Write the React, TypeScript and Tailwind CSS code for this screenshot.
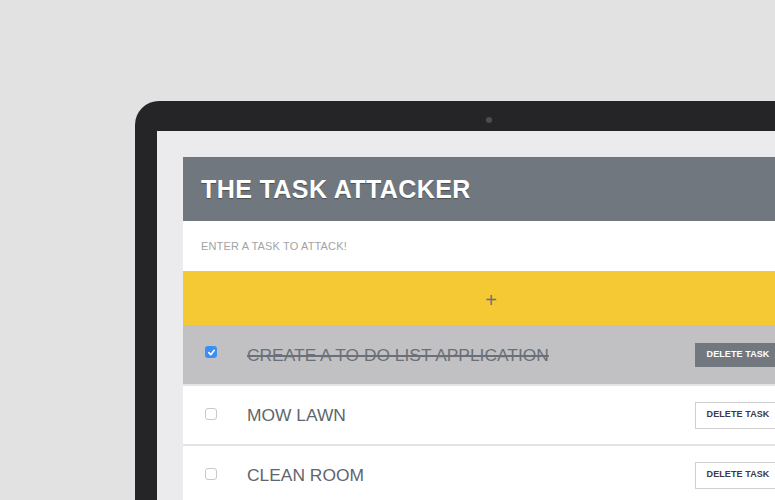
import React from 'react'

interface Task {
  id: number
  title: string
  done: boolean
}

const tasks: Task[] = [
  { id: 1, title: 'Create a to do list application', done: true },
  { id: 2, title: 'Mow lawn', done: false },
  { id: 3, title: 'Clean room', done: false },
]

function CheckBox({ checked }: { checked: boolean }) {
  if (checked) {
    return (
      <div className="w-[12px] h-[12px] rounded-[3px] bg-[#3b8ff3] flex items-center justify-center shrink-0">
        <svg width="9" height="9" viewBox="0 0 10 10">
          <path d="M2 5.2 L4.2 7.4 L8 2.6" fill="none" stroke="white" strokeWidth="1.8" strokeLinecap="round" strokeLinejoin="round" />
        </svg>
      </div>
    )
  }
  return <div className="w-[12px] h-[12px] rounded-[3px] border border-[#c9c9c9] bg-white shrink-0" />
}

function TaskRow({ task }: { task: Task }) {
  return (
    <div
      className={
        task.done
          ? 'h-[61px] flex items-center bg-[#c1c1c3] border-b-2 border-[#e4e4e6] pl-[22px] pr-[18px]'
          : 'h-[60px] flex items-center bg-white border-b-2 border-[#e4e4e6] pl-[22px] pr-[18px]'
      }
    >
      <div className={task.done ? '-mt-[5px]' : '-mt-[3px]'}>
        <CheckBox checked={task.done} />
      </div>
      <div
        className={
          task.done
            ? 'ml-[30px] flex-1 uppercase text-[17.4px] text-[#6b7078] line-through decoration-[1.5px] pt-[1px]'
            : 'ml-[30px] flex-1 uppercase text-[17.4px] text-[#5f656d]'
        }
      >
        {task.title}
      </div>
      <button
        className={
          task.done
            ? 'h-[24px] w-[86px] bg-[#71787f] text-white text-[9px] font-bold tracking-[0.1px] mt-[1px]'
            : 'h-[27px] w-[86px] bg-white border border-[#cfcfd1] text-[#3d3a46] text-[9px] font-bold tracking-[0.1px]'
        }
      >
        DELETE TASK
      </button>
    </div>
  )
}

export default function App() {
  return (
    <div
      className="w-[775px] h-[500px] overflow-hidden bg-[#e2e2e2] pt-[101px] pl-[135px] flex"
      style={{ fontFamily: '"Liberation Sans", Arial, sans-serif' }}
    >
      {/* laptop bezel */}
      <div className="relative w-[720px] shrink-0 bg-[#252527] rounded-tl-[24px] pt-[30px] pl-[22px]">
        <div className="absolute top-[16px] left-[351px] w-[6px] h-[6px] rounded-full bg-[#4d4d50]" />

        {/* screen */}
        <div className="h-full bg-[#ebebed] pt-[26px] pl-[26px]">
          <div className="w-[616px] bg-white">
            <div className="h-[64px] bg-[#70777e] flex items-center pl-[18px]">
              <h1
                className="text-white text-[25px] font-bold tracking-[0.4px] pt-[1px]"
                style={{ textShadow: '0 1px 1px rgba(0,0,0,0.35)' }}
              >
                THE TASK ATTACKER
              </h1>
            </div>
            <div className="h-[50px] flex items-center pl-[18px]">
              <span className="text-[11px] text-[#a3a3a5] tracking-[0.15px]">ENTER A TASK TO ATTACK!</span>
            </div>
            <div className="h-[54px] bg-[#f5c934] flex items-center justify-center">
              <span className="text-[#6b7078] text-[20px] leading-none pt-[3px]">+</span>
            </div>
            {tasks.map(t => (
              <TaskRow key={t.id} task={t} />
            ))}
          </div>
        </div>
      </div>
    </div>
  )
}
